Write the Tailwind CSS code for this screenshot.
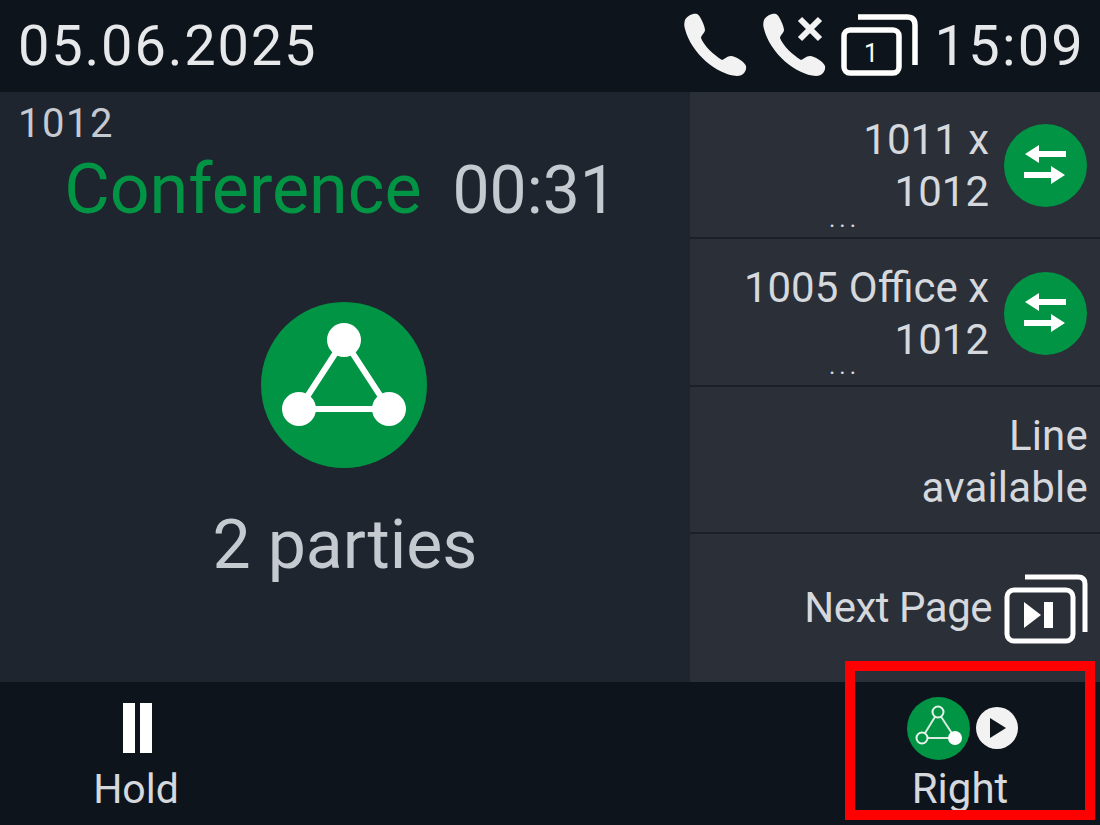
<!DOCTYPE html>
<html lang="en">
<head>
<meta charset="UTF-8" />
<title>Phone Conference</title>
<script src="https://cdn.jsdelivr.net/npm/@tailwindcss/browser@4"></script>
</head>
<body class="bg-[#0e141c]">
<div class="relative w-[1100px] h-[825px] overflow-hidden flex flex-col font-['Roboto',sans-serif] bg-[#0e141c]">
  <!-- status bar -->
  <div class="h-[92px] flex items-center justify-between pl-[18px] pr-[15px] text-[#e6e8ea]">
    <span class="text-[56px] leading-none tracking-[1.8px]">05.06.2025</span>
    <div class="flex items-center">
      <svg class="w-[64px] h-[64px] mt-[-2px]" viewBox="0 0 64 64"><path fill="#f2f2f2" d="M2 7 C4 3 10 0 14 1 C17 2 22 13 22 17 C22 20 18 22 18 25 C21 33 31 42 39 47 C42 46 44 43 48 43 C52 43 62 49 63 53 C64 58 60 63 54 63 C34 62 8 40 2 16 C1 13 1 10 2 7 Z"/></svg>
      <svg class="w-[64px] h-[64px] ml-[15px] mt-[-2px]" viewBox="0 0 64 64"><path fill="#f2f2f2" d="M2 7 C4 3 10 0 14 1 C17 2 22 13 22 17 C22 20 18 22 18 25 C21 33 31 42 39 47 C42 46 44 43 48 43 C52 43 62 49 63 53 C64 58 60 63 54 63 C34 62 8 40 2 16 C1 13 1 10 2 7 Z"/><path stroke="#f2f2f2" stroke-width="6" d="M38 6 L58 26 M58 6 L38 26"/></svg>
      <div class="relative w-[78px] h-[64px] ml-[15px] mt-[-2px]">
        <svg class="absolute inset-0" viewBox="0 0 78 64" fill="none" stroke="#fff" stroke-width="5.500"><rect x="3" y="17" width="55" height="43" rx="6"/><path d="M17 4 H66 Q74 4 74 12 V52"/></svg>
        <span class="absolute left-[3px] top-[26px] w-[55px] text-center text-[25px] leading-[30px] text-white">1</span>
      </div>
      <span class="ml-[16px] text-[56px] leading-none tracking-[2.200px]">15:09</span>
    </div>
  </div>
  <!-- main -->
  <div class="h-[590px] flex">
    <div class="w-[690px] bg-[#1f252e] flex flex-col">
      <span class="pl-[18px] pt-[9px] text-[40px] leading-[46px] text-[#c5cad1] tracking-[1.500px]">1012</span>
      <div class="flex justify-center items-baseline gap-[31px] mt-[2px] pr-[9px] text-[70px] leading-[80px]">
        <span class="text-[#009444]">Conference</span>
        <span class="text-[#c5cad1] text-[66px]">00:31</span>
      </div>
      <div class="flex justify-center mt-[71px] pr-[2px]">
        <svg class="w-[166px] h-[166px]" viewBox="0 0 166 166"><circle cx="83" cy="83" r="83" fill="#009444"/><path d="M83 38 L38 107 H128 Z" fill="none" stroke="#fff" stroke-width="6"/><circle cx="83" cy="38" r="17" fill="#fff"/><circle cx="38" cy="107" r="17" fill="#fff"/><circle cx="128" cy="107" r="17" fill="#fff"/></svg>
      </div>
      <div class="text-center text-[68px] leading-[80px] text-[#c5cad1] mt-[37px]">2 parties</div>
    </div>
    <div class="flex-1 bg-[#2a2f38] flex flex-col text-[#d5d8dc] text-[42px] leading-[52px]">
      <div class="relative h-[147px] border-b-2 border-[#1a2028] flex items-center justify-end pr-[13px]">
        <div class="text-right mr-[15px] mt-[3px]"><div>1011 x</div><div>1012</div></div>
        <svg class="w-[83px] h-[83px] mt-[2px]" viewBox="0 0 83 83"><circle cx="41.500" cy="41.500" r="41.500" fill="#009444"/><path fill="#fff" d="M21 30 L35 21 V27 H62 V33 H35 V39 Z M61 51 L47 42 V48 H20 V54 H47 V60 Z"/></svg>
        <span class="absolute left-[139px] top-[117px] text-[24px] leading-[20px] tracking-[4px]">...</span>
      </div>
      <div class="relative h-[148px] border-b-2 border-[#1a2028] flex items-center justify-end pr-[13px]">
        <div class="text-right mr-[15px] mt-[3px]"><div>1005 Office x</div><div>1012</div></div>
        <svg class="w-[83px] h-[83px] mt-[2px]" viewBox="0 0 83 83"><circle cx="41.500" cy="41.500" r="41.500" fill="#009444"/><path fill="#fff" d="M21 30 L35 21 V27 H62 V33 H35 V39 Z M61 51 L47 42 V48 H20 V54 H47 V60 Z"/></svg>
        <span class="absolute left-[139px] top-[117px] text-[24px] leading-[20px] tracking-[4px]">...</span>
      </div>
      <div class="h-[147px] border-b-2 border-[#1a2028] flex items-center justify-end pr-[12px] text-right tracking-[0.200px]">
        <div class="mt-[4px]"><div>Line</div><div>available</div></div>
      </div>
      <div class="flex-1 flex items-center justify-end pr-[12px] tracking-[-0.500px]">
        <span class="mr-[12px]">Next Page</span>
        <svg class="w-[84px] h-[70px] mt-[2px]" viewBox="0 0 84 70" fill="none" stroke="#fff" stroke-width="5"><rect x="3" y="16" width="66" height="51" rx="7"/><path d="M21 3 H74 Q81 3 81 10 V58"/><path d="M20 28 L37 41 L20 54 Z" fill="#fff" stroke="none"/><rect x="40" y="28" width="9" height="26" fill="#fff" stroke="none"/></svg>
      </div>
    </div>
  </div>
  <!-- softkeys -->
  <div class="flex-1 flex justify-between text-[#d5d8dc] text-[41px] leading-[50px]">
    <div class="w-[272px] flex flex-col items-center pt-[21px]">
      <div class="flex gap-[5px] h-[50px] ml-[3px]"><div class="w-[12px] bg-white"></div><div class="w-[12px] bg-white"></div></div>
      <span class="mt-[11px]">Hold</span>
    </div>
    <div class="w-[260px] flex flex-col items-center pt-[15px] mr-[10px]">
      <div class="flex items-center gap-[6px] ml-[4px]">
        <svg class="w-[63px] h-[63px]" viewBox="0 0 63 63"><circle cx="31.500" cy="31.500" r="31.500" fill="#009444"/><path d="M31 15 L15 41 H48 Z" fill="none" stroke="#d8ecdf" stroke-width="2"/><circle cx="31" cy="15" r="5.500" fill="#009444" stroke="#e8f3ec" stroke-width="2"/><circle cx="15" cy="41" r="5.500" fill="#009444" stroke="#e8f3ec" stroke-width="2"/><circle cx="48" cy="41" r="7" fill="#fff"/></svg>
        <svg class="w-[42px] h-[42px] mt-[-2px]" viewBox="0 0 42 42"><circle cx="21" cy="21" r="21" fill="#f2f2f2"/><path d="M14 11 L30 21 L14 31 Z" fill="#0e141c"/></svg>
      </div>
      <span class="mt-[4px] text-[42px]">Right</span>
    </div>
  </div>
  <!-- selected softkey highlight -->
  <div class="absolute left-[845px] top-[661px] w-[250px] h-[159px] border-[10px] border-[#ff0000]"></div>
</div>
</body>
</html>
